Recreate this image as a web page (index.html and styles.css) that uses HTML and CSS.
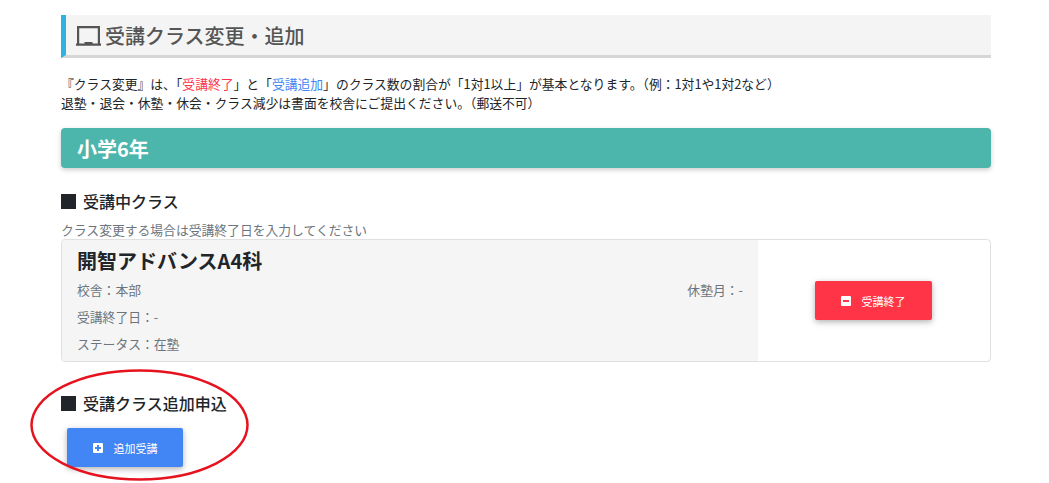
FILE: index.html
```html
<!DOCTYPE html>
<html lang="ja">
<head>
<meta charset="utf-8">
<title>受講クラス変更・追加</title>
<link rel="stylesheet" href="styles.css">
</head>
<body>
<main class="page">
  <h1 class="title">
    <svg class="title-icon" width="26" height="24" viewBox="0 0 26 24"><path d="M1 3h23v18h-2.200V5.200H3.200V21H1z" fill="#555"/><path d="M0 20.500h8.500v-1.500h8v1.500H25v2.300H0z" fill="#555"/></svg>
    <span>受講クラス変更・追加</span>
  </h1>
  <p class="intro">『クラス変更』は、「<span class="red">受講終了</span>」と「<span class="blue">受講追加</span>」のクラス数の割合が「1対1以上」が基本となります。&#xFF08;例&#xFF1A;1対1や1対2など&#xFF09;<br>退塾・退会・休塾・休会・クラス減少は書面を校舎にご提出ください。&#xFF08;郵送不可&#xFF09;</p>
  <h2 class="grade">小学6年</h2>
  <h3 class="section"><span class="square"></span>受講中クラス</h3>
  <p class="note">クラス変更する場合は受講終了日を入力してください</p>
  <section class="card">
    <div class="card-info">
      <h4 class="course">開智アドバンスA4科</h4>
      <div class="row"><span>校舎&#xFF1A;本部</span><span>休塾月&#xFF1A;-</span></div>
      <div class="row"><span>受講終了日&#xFF1A;-</span></div>
      <div class="row"><span>ステータス&#xFF1A;在塾</span></div>
    </div>
    <div class="card-action">
      <a class="btn btn-red">
        <svg class="btn-icon" width="10" height="10" viewBox="0 0 10 10"><path fill-rule="evenodd" d="M1 0h8a1 1 0 0 1 1 1v8a1 1 0 0 1-1 1H1a1 1 0 0 1-1-1V1a1 1 0 0 1 1-1zM2 4v2h6V4z" fill="#fff"/></svg>
        受講終了
      </a>
    </div>
  </section>
  <h3 class="section section-add"><span class="square"></span>受講クラス追加申込</h3>
  <a class="btn btn-blue">
    <svg class="btn-icon" width="10" height="10" viewBox="0 0 10 10"><path fill-rule="evenodd" d="M1 0h8a1 1 0 0 1 1 1v8a1 1 0 0 1-1 1H1a1 1 0 0 1-1-1V1a1 1 0 0 1 1-1zM4 2v2H2v2h2v2h2V6h2V4H6V2z" fill="#fff"/></svg>
    追加受講
  </a>
</main>
<svg class="circle" width="230" height="120" viewBox="0 0 230 120"><ellipse cx="115.500" cy="60" rx="108" ry="54.500" fill="none" stroke="#e6131f" stroke-width="2.500"/></svg>
</body>
</html>
```
FILE: styles.css
```css
* { box-sizing: border-box; }
html, body { margin: 0; padding: 0; background: #fff; }
body {
  position: relative;
  height: 483px;
  overflow: hidden;
  font-family: "Noto Sans CJK JP", "Noto Sans", sans-serif;
  color: #212529;
}
.page { width: 930px; margin-left: 61px; padding-top: 15px; }
.title {
  display: flex;
  align-items: center;
  gap: 3px;
  height: 43px;
  margin: 0;
  padding-left: 10px;
  background: #f4f4f4;
  border-left: 5px solid #2eb3e0;
  border-bottom: 3px solid #d6d6d6;
  font-size: 20px;
  font-weight: 500;
  color: #555;
}
.title-icon { flex: none; }
.intro { margin: 16px 0 0; font-size: 12.800px; line-height: 19px; color: #212529; }
.red { color: #ff334b; }
.blue { color: #4285f4; }
.grade {
  display: flex;
  align-items: center;
  height: 40px;
  margin: 16px 0 0;
  padding-left: 16px;
  background: #4db6ac;
  border-radius: 4px;
  color: #fff;
  font-size: 20px;
  font-weight: 700;
  box-shadow: 0 2px 5px rgba(0,0,0,.2);
}
.section {
  display: flex;
  align-items: center;
  margin: 22px 0 0;
  font-size: 16px;
  line-height: 22px;
  font-weight: 500;
}
.square { width: 15px; height: 15px; margin-right: 7px; background: #212529; }
.note { margin: 10px 0 1px; font-size: 12.800px; line-height: 16px; color: #6c757d; }
.card {
  display: flex;
  height: 123px;
  border: 1px solid #e0e0e0;
  border-radius: 4px;
  overflow: hidden;
}
.card-info {
  width: 696px;
  padding: 6px 15px 0;
  background: #f5f5f5;
}
.course { margin: 0; font-size: 20px; line-height: 30px; font-weight: 700; }
.row {
  display: flex;
  justify-content: space-between;
  font-size: 12.800px;
  line-height: 27px;
  color: #6c757d;
}
.card-action { flex: 1; display: flex; align-items: center; justify-content: center; padding-right: 2px; }
.btn {
  display: flex;
  align-items: center;
  justify-content: center;
  gap: 11px;
  height: 39px;
  border-radius: 2px;
  color: #fff;
  font-size: 11px;
  box-shadow: 0 2px 5px rgba(0,0,0,.2), 0 2px 10px rgba(0,0,0,.12);
}
.btn-icon { flex: none; }
.btn-red { width: 117px; background: #ff3547; }
.btn-blue { width: 116px; margin: 14px 0 0 6px; background: #4285f4; }
.section-add { margin-top: 30px; }
.circle { position: absolute; left: 24px; top: 365px; }
```
